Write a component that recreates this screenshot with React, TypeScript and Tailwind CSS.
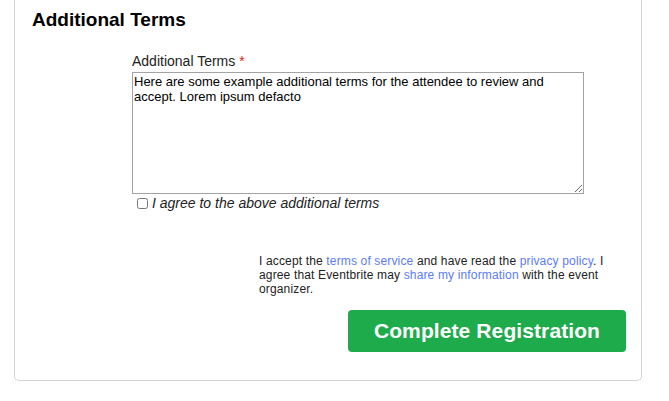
// Additional Terms section of a registration form.

export default function App() {
  return (
    <div className="w-[669px] h-[401px] bg-white font-['Liberation_Sans',Arial,sans-serif] text-[#222]">
      <div className="ml-[14px] w-[628px] border-x border-b border-[#d4d4d4] rounded-b-[5px] pb-[28px]">
        <h2 className="pl-[17px] pt-[9px] text-[19px] leading-[22px] font-bold text-black">
          Additional Terms
        </h2>

        {/* Terms field */}
        <div className="ml-[117px] mt-[22px] w-[452px]">
          <label className="block text-[14px] leading-[17px] text-[#222] mb-[2px]">
            Additional Terms <span className="text-[#e0201c]">*</span>
          </label>
          <textarea
            readOnly
            className="block w-[452px] h-[122px] border border-[#a3a3a3] px-[1px] py-[1px] text-[13px] leading-[15px] text-black resize-y outline-none"
            defaultValue="Here are some example additional terms for the attendee to review and accept. Lorem ipsum defacto"
          />
          <label className="flex items-center mt-[1px] ml-[5px] gap-[4px] text-[14px] leading-[17px] italic text-[#222]">
            <input type="checkbox" className="w-[11px] h-[11px] m-0 rounded-[2px] border border-[#888]" />
            I agree to the above additional terms
          </label>
        </div>

        <p className="ml-[244px] mt-[42px] w-[356px] text-[12px] leading-[14px] tracking-[0.15px] text-[#222]">
          I accept the <a className="text-[#5b7cf7]">terms of service</a> and have read the{" "}
          <a className="text-[#5b7cf7]">privacy policy</a>. I agree that Eventbrite may{" "}
          <a className="text-[#5b7cf7]">share my information</a> with the event organizer.
        </p>

        <div className="flex justify-end pr-[15px] mt-[14px]">
          <button
            type="button"
            className="w-[278px] h-[42px] rounded-[4px] bg-[#1dab4b] text-white text-[21px] font-bold tracking-[0.1px]"
          >
            Complete Registration
          </button>
        </div>
      </div>
    </div>
  );
}
